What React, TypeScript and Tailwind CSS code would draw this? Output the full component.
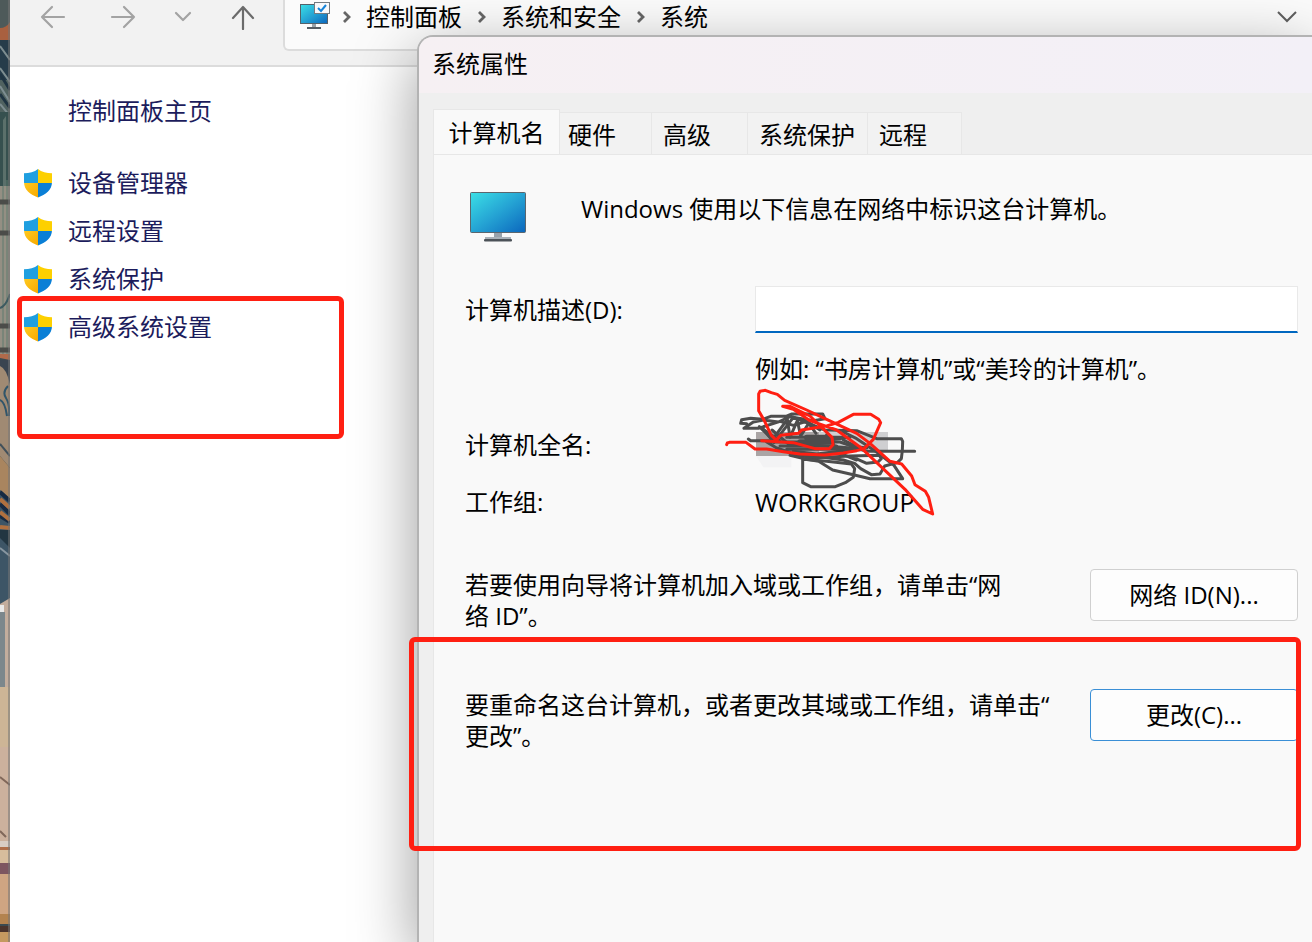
import type { ReactNode } from "react";

const TASKS = ["设备管理器", "远程设置", "系统保护", "高级系统设置"];

const CRUMBS = ["控制面板", "系统和安全", "系统"];

const TABS = [
  { label: "硬件", size: "w-[92px] pl-2" },
  { label: "高级", size: "w-24 pl-[11px]" },
  { label: "系统保护", size: "w-[120px] pl-[11px]" },
  { label: "远程", size: "w-[94px] pl-[11px]" },
];

function Wallpaper() {
  return (
    <svg
      className="absolute inset-0 h-full w-full"
      viewBox="0 0 10 942"
      preserveAspectRatio="none"
      aria-hidden="true"
    >
      <rect width="10" height="942" fill="#3a4a50" />
      <path d="M0 0h10v24L0 30z" fill="#4e5a5a" />
      <path d="M0 28q6 0 10-6v18H0z" fill="#a9603f" />
      <rect y="40" width="10" height="50" fill="#263c4a" />
      <rect y="80" width="10" height="70" fill="#506260" />
      <path d="M0 46l10 14M0 68l10 14M0 86l10 16M0 104l10 12" stroke="#7d8d90" strokeWidth="2" />
      <path d="M0 74l10 16M0 94l10 14" stroke="#1f3442" strokeWidth="3" />
      <path d="M0 112h10v78H0z" fill="#36504f" />
      <path d="M3 120l3-4v70H3z" fill="#5b706b" />
      <rect y="186" width="10" height="168" fill="#948f83" />
      <path d="M3 186v168M7 180v174" stroke="#5f7a6f" strokeWidth="1" />
      <path d="M0 202h10M0 233h10M0 326h10M0 350h10" stroke="#4b4c49" strokeWidth="5" />
      <path d="M0 308q6-2 10-14" stroke="#3c5a60" strokeWidth="2" fill="none" />
      <path d="M0 354h10v6L0 358z" fill="#b06a4a" />
      <path d="M0 360h10v22L0 370z" fill="#3a4450" />
      <path d="M0 366q6 2 10 18v84l-10-12z" fill="#a08a73" />
      <path d="M8 386q-6 6-2 12t3 18M0 400q5 2 7 16" stroke="#31556a" strokeWidth="2" fill="none" />
      <path d="M0 444l10 12" stroke="#41505a" strokeWidth="2" />
      <path d="M0 456l10 12v36L0 490z" fill="#a9855f" />
      <path d="M0 490l10 10v104H0z" fill="#3d5566" />
      <path d="M0 492l10 9M0 504l10 10M0 516l10 6" stroke="#172a42" strokeWidth="4" />
      <path d="M0 499l10 9M0 512l10 8M0 527l10 1" stroke="#b0703f" strokeWidth="4" />
      <path d="M0 530h10v18L0 538z" fill="#223642" />
      <path d="M0 548l10 8" stroke="#8896a0" strokeWidth="2" />
      <path d="M0 604l10-6v90H0z" fill="#c3ad9d" />
      <rect y="612" width="5" height="75" fill="#7c878c" />
      <rect y="605" width="4" height="7" fill="#e9e9e9" />
      <rect y="687" width="10" height="162" fill="#ccb19d" />
      <path d="M0 687h10v60H0z" fill="#cdb596" />
      <path d="M0 777l10 8M0 831l6 6" stroke="#806759" strokeWidth="2" />
      <rect y="841" width="10" height="6" fill="#d9cdc4" />
      <rect y="847" width="10" height="3" fill="#b06f4a" />
      <rect y="850" width="10" height="13" fill="#d6bd9c" />
      <rect y="863" width="10" height="11" fill="#7d5660" />
      <rect y="874" width="10" height="40" fill="#cfa582" />
      <rect y="914" width="10" height="10" fill="#b3834f" />
      <rect y="926" width="10" height="6" fill="#4a342c" />
      <rect y="932" width="10" height="10" fill="#c59a60" />
      <rect x="8" width="2" height="942" fill="#777" opacity="0.55" />
    </svg>
  );
}

function Shield() {
  return (
    <svg width="28" height="30" viewBox="0 0 28 30" className="shrink-0" aria-hidden="true">
      <defs>
        <clipPath id="shield">
          <path d="M14 1c3.600 3 8.600 4.300 14 4.300V14c0 8-6.500 12.600-14 15.500C6.500 26.600 0 22 0 14V5.300C5.400 5.300 10.400 4 14 1z" />
        </clipPath>
        <linearGradient id="shield-gold" x1="0" y1="0" x2="1" y2="1">
          <stop offset="0" stopColor="#ffc91f" />
          <stop offset="1" stopColor="#f6a800" />
        </linearGradient>
      </defs>
      <g clipPath="url(#shield)">
        <path d="M0 0h14v15H0z" fill="#1f9fe0" />
        <path d="M14 0h14v15H14z" fill="#fdd000" />
        <path d="M0 15h14v15H0z" fill="url(#shield-gold)" />
        <path d="M14 15h14v15H14z" fill="#0a7fd6" />
      </g>
    </svg>
  );
}

function Monitor() {
  return (
    <svg width="58" height="52" viewBox="0 0 58 52" className="shrink-0" aria-hidden="true">
      <defs>
        <linearGradient id="screen" x1="0" y1="0" x2="1" y2="1">
          <stop offset="0" stopColor="#3be0e6" />
          <stop offset="0.500" stopColor="#25a4d4" />
          <stop offset="1" stopColor="#0b66bd" />
        </linearGradient>
      </defs>
      <path d="M25 41h8v7h-8z" fill="#98a2ab" />
      <path d="M16 46h26v2H16z" fill="#a9b1b8" />
      <rect x="15" y="48" width="28" height="2.500" rx="1" fill="#4c5258" />
      <rect x="1.500" y="1.500" width="55" height="40" rx="1" fill="url(#screen)" stroke="#5b666e" />
    </svg>
  );
}

function SystemIcon() {
  return (
    <svg width="30" height="30" viewBox="0 0 30 30" className="shrink-0" aria-hidden="true">
      <path d="M12 21h4v5h-4z" fill="#9aa3aa" />
      <rect x="7" y="25" width="14" height="2" fill="#555d64" />
      <rect x="0.500" y="2.500" width="27" height="19" fill="url(#screen)" stroke="#54616a" />
      <rect x="14.500" y="0.500" width="15" height="11" fill="#f7f9fb" stroke="#737b82" />
      <path d="M18 6l3 3 5-6" fill="none" stroke="#1683d8" strokeWidth="2" />
    </svg>
  );
}

function Chevron() {
  return (
    <svg width="10" height="14" viewBox="0 0 10 14" className="shrink-0" aria-hidden="true">
      <path d="M2 2l5 5-5 5" fill="none" stroke="#666" strokeWidth="2.800" />
    </svg>
  );
}

function NavButton({ label, dim, children }: { label: string; dim?: boolean; children: ReactNode }) {
  return (
    <button
      type="button"
      aria-label={label}
      className={dim ? "flex text-[#a3a3a3]" : "flex text-[#6b6b6b]"}
    >
      <svg
        width="26"
        height="26"
        viewBox="0 0 26 26"
        fill="none"
        stroke="currentColor"
        strokeWidth="2.200"
        strokeLinecap="round"
        strokeLinejoin="round"
      >
        {children}
      </svg>
    </button>
  );
}

function Toolbar() {
  return (
    <header className="flex h-[67px] items-start border-b-2 border-[#dcdcdc] bg-[#f2f2f2]">
      <div className="flex w-[273px] shrink-0 items-center gap-[34px] pt-1 pl-[30px]">
        <div className="flex gap-11">
          <NavButton label="后退" dim>
            <path d="M24 13H2M12 3L2 13l10 10" />
          </NavButton>
          <NavButton label="前进" dim>
            <path d="M2 13h22M14 3l10 10-10 10" />
          </NavButton>
        </div>
        <NavButton label="最近浏览的位置" dim>
          <path d="M6 9l7 7 7-7" />
        </NavButton>
        <NavButton label="向上">
          <path d="M13 25V3M3 14L13 3l10 11" />
        </NavButton>
      </div>
      <div className="flex h-[51px] flex-1 items-start rounded-bl-md border-b-2 border-l-2 border-[#dcdcdc] bg-[#fbfbfb] pl-[15px]">
        <nav className="flex h-[34px] flex-1 items-center gap-3 text-black">
          <SystemIcon />
          <div className="flex items-center gap-[15px]">
            {CRUMBS.map((crumb) => (
              <div key={crumb} className="flex items-center gap-[14px]">
                <Chevron />
                <a href="#">{crumb}</a>
              </div>
            ))}
          </div>
        </nav>
        <button type="button" aria-label="展开" className="mt-[6px] mr-[14px] text-[#5f5f5f]">
          <svg width="22" height="22" viewBox="0 0 22 22" fill="none" stroke="currentColor" strokeWidth="2">
            <path d="M2 6l9 9 9-9" />
          </svg>
        </button>
      </div>
    </header>
  );
}

function Sidebar() {
  return (
    <aside className="flex-1 bg-white pt-7 pl-[14px] text-[#1c1c5c]">
      <a href="#" className="ml-11 block leading-8">
        控制面板主页
      </a>
      <ul className="mt-10 space-y-4">
        {TASKS.map((task) => (
          <li key={task}>
            <a href="#" className="flex h-8 items-center gap-4">
              <Shield />
              {task}
            </a>
          </li>
        ))}
      </ul>
    </aside>
  );
}

function Scribble() {
  return (
    <svg
      width="240"
      height="150"
      viewBox="0 0 720 450"
      className="pointer-events-none absolute -top-[106px] -left-[45px]"
      fill="none"
      strokeWidth="9"
      strokeLinecap="round"
      strokeLinejoin="round"
      aria-hidden="true"
    >
      <path d="M138 156h190v72H138z" fill="#aaa5a5" />
      <path d="M328 156h206v60H328z" fill="#cfcfd1" />
      <path d="M138 228h106v34H160z" fill="#f3f3f4" />
      <g stroke="#4d4d4d">
        <path d="M110 131L92 130L95 119L122 115L158 118L182 109H228L244 102H338L345 116L310 122L240 110L205 126L160 120L130 126L102 145H145L210 124L250 136L290 124L330 150" />
        <path d="M115 177L122 182H210L148 140L188 178L232 118L240 172L262 122L272 168L296 130L318 160" />
        <path d="M158 145L192 188L250 112L345 150L440 152L500 176H574L578 184L577 212L574 236L562 248L524 258L510 282L484 284L452 266L434 250L400 240L340 232L270 228L200 204L170 186H390L470 214H614" />
        <path d="M186 150L240 196L420 172L250 190L450 206L320 222L250 214L300 234L420 228L508 226L514 236L504 246L470 250L430 232" />
        <path d="M278 234V308L302 320H376L406 308L430 292L434 266L424 252L350 244L280 238" />
        <path d="M240 226L290 238L326 244L368 270L430 284L480 296H578L552 256L500 216L440 176L400 156" />
        <path d="M400 180L440 200L470 204M230 172H400M210 198H380M230 208H450M350 164L390 220L440 240" />
        <path d="M290 172H356M270 186H360" strokeWidth="16" />
      </g>
      <path
        d="M50 194L52 189L58 187H108L135 207H170L220 215L270 222L345 225L400 219L440 212L462 206L490 178L512 128L506 118L482 103H430L385 127L350 138L275 150L265 160L212 166L204 174L200 182L184 166L164 124L146 92V42L150 34L166 31L184 38L202 43L224 61L290 90L345 116L440 160L480 190L540 244L575 252L605 288L615 314L646 334L656 352L668 402L638 388L585 328L455 205L380 150L300 122L250 88L218 79H240L300 108L345 152L366 172L369 194L358 206H315L250 188L155 182"
        stroke="#ff1f12"
      />
    </svg>
  );
}

function TabBar() {
  return (
    <div role="tablist" className="flex items-end pl-[14px]">
      <button
        type="button"
        role="tab"
        aria-selected="true"
        className="-mb-px h-[46px] w-[127px] shrink-0 border border-b-0 border-[#e7e7e7] bg-[#f9f9f9]"
      >
        计算机名
      </button>
      {TABS.map((tab) => (
        <button
          key={tab.label}
          type="button"
          role="tab"
          aria-selected="false"
          className={`h-[42px] shrink-0 border border-b-0 border-l-0 border-[#e7e7e7] bg-[#f2f2f2] pt-[2px] text-left ${tab.size}`}
        >
          {tab.label}
        </button>
      ))}
    </div>
  );
}

function PropertiesDialog() {
  return (
    <section
      aria-label="系统属性"
      className="absolute top-[35px] right-0 bottom-0 left-[417px] flex flex-col overflow-hidden rounded-tl-2xl border-t-2 border-l-2 border-[#b3b3b3] bg-[#efefef] text-black shadow-[0_20px_64px_rgba(0,0,0,0.4)]"
    >
      <h1 className="h-14 bg-linear-to-r from-[#f6f0f3] to-[#f3f0f7] pt-[11px] pl-[13px] leading-8">
        系统属性
      </h1>
      <div className="pt-4">
        <TabBar />
      </div>
      <div className="ml-[14px] flex-1 border-t border-l border-[#e7e7e7] bg-[#f9f9f9] pr-[14px] pl-[31px]">
        <div className="flex items-start gap-[54px] pt-9 pl-1">
          <Monitor />
          <p className="leading-9">Windows 使用以下信息在网络中标识这台计算机。</p>
        </div>

        <div className="mt-[43px] grid grid-cols-[290px_1fr] items-center">
          <label htmlFor="description">计算机描述(D):</label>
          <input
            id="description"
            type="text"
            className="h-[47px] border border-b-2 border-[#e9e9e9] border-b-[#0067c0] bg-white px-2 outline-none"
          />
          <p className="col-start-2 mt-5 leading-8">例如: “书房计算机”或“美玲的计算机”。</p>
        </div>

        <dl className="mt-11 grid grid-cols-[290px_1fr] gap-y-[25px] leading-8">
          <dt>计算机全名:</dt>
          <dd />
          <dt>工作组:</dt>
          <dd className="relative text-[25px]">
            WORKGROUP
            <Scribble />
          </dd>
        </dl>

        <div className="mt-[51px] flex items-start justify-between">
          <p className="w-[550px] leading-[31px]">若要使用向导将计算机加入域或工作组，请单击“网络 ID”。</p>
          <button
            type="button"
            className="h-[52px] w-[208px] rounded border border-[#d0d0d0] bg-[#fdfdfd]"
          >
            网络 ID(N)...
          </button>
        </div>
        <div className="mt-[58px] flex items-start justify-between">
          <p className="w-[592px] leading-[31px]">
            要重命名这台计算机，或者更改其域或工作组，请单击“
            <br />
            更改”。
          </p>
          <button
            type="button"
            className="h-[52px] w-[208px] rounded border border-[#3a8fd6] bg-[#fdfdfd]"
          >
            更改(C)...
          </button>
        </div>
      </div>
    </section>
  );
}

export default function App() {
  return (
    <div
      lang="zh-CN"
      className="relative flex min-h-screen overflow-hidden bg-white font-['Open_Sans','Noto_Sans_CJK_SC',sans-serif] text-2xl"
    >
      <main className="flex min-w-0 flex-1 flex-col pl-[10px]">
        <Toolbar />
        <Sidebar />
      </main>
      <PropertiesDialog />
      <div className="absolute inset-y-0 left-0 w-[10px]">
        <Wallpaper />
      </div>
      <div className="pointer-events-none absolute top-[296px] left-[17px] h-[143px] w-[327px] rounded-md border-5 border-[#ff1f12]" />
      <div className="pointer-events-none absolute top-[637px] left-[409px] h-[214px] w-[892px] rounded-md border-5 border-[#ff1f12]" />
    </div>
  );
}
